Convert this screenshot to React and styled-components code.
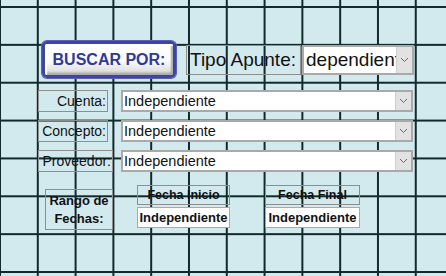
import React from "react";
import styled, { createGlobalStyle } from "styled-components";

const Global = createGlobalStyle`
  html, body { margin: 0; padding: 0; }
  body {
    background-color: #d2e9ee;
    font-family: "Liberation Sans", Arial, sans-serif;
  }
`;

const Sheet = styled.div`
  width: 446px;
  height: 276px;
  box-sizing: border-box;
  overflow: hidden;
  background-color: #d2e9ee;
  background-image:
    linear-gradient(to right, #10292b 2px, transparent 2px),
    linear-gradient(to bottom, #10292b 2px, transparent 2px);
  background-size: 37.8px 37.86px;
  background-position: -1px 6px;
  padding: 41px 0 0 38px;
  display: flex;
  flex-direction: column;
`;

const TopRow = styled.div`
  display: flex;
  align-items: center;
  padding-left: 4px;
  height: 37px;
  margin-bottom: 12px;
`;

const SearchButton = styled.div`
  box-sizing: border-box;
  width: 134px;
  height: 37px;
  border: 3px solid #3d44a3;
  border-radius: 5px;
  box-shadow: 0 0 0 1px #5a60b8;
  background: linear-gradient(#ffffff 0%, #fafafa 55%, #e2e2e2 85%, #bdbdbd 100%);
  display: flex;
  align-items: center;
  justify-content: center;
  font-weight: bold;
  font-size: 16px;
  color: #2f3a9c;
  position: relative;
  &::after {
    content: "";
    position: absolute;
    inset: 0;
    border-radius: 2px;
    box-shadow: inset 2px 2px 1px #ffffff, inset -2px -2px 2px #a9a9a9;
  }
`;

const Label = styled.div`
  box-sizing: border-box;
  width: ${(p) => p.$w}px;
  height: ${(p) => p.$h}px;
  margin-left: ${(p) => p.$ml || 0}px;
  border: 1.5px solid #8e8e8e;
  display: flex;
  align-items: center;
  justify-content: ${(p) => (p.$left ? "flex-start" : "flex-end")};
  padding: 0 ${(p) => (p.$left ? 0 : 1)}px 0 ${(p) => (p.$left ? 3 : 0)}px;
  font-size: ${(p) => p.$size}px;
  color: #111;
  white-space: nowrap;
  flex: 0 0 auto;
`;

const Select = styled.div`
  box-sizing: border-box;
  width: ${(p) => p.$w}px;
  height: ${(p) => p.$h}px;
  margin-left: ${(p) => p.$ml}px;
  border: 2px solid #a9a9a9;
  background: #fff;
  display: flex;
  align-items: stretch;
  flex: 0 0 auto;
  overflow: hidden;
`;

const SelectText = styled.div`
  flex: 1;
  min-width: 0;
  overflow: hidden;
  white-space: nowrap;
  display: flex;
  align-items: center;
  padding-left: ${(p) => p.$pl}px;
  font-size: ${(p) => p.$size}px;
  color: #111;
`;

const DropButton = styled.div`
  width: 15px;
  flex: 0 0 15px;
  background: #e2e2e2;
  border-left: 1px solid #cfcfcf;
  display: flex;
  align-items: center;
  justify-content: center;
`;

const FieldRow = styled.div`
  display: flex;
  align-items: center;
  width: 375px;
  height: 22px;
  margin-bottom: 8px;
`;

const DateArea = styled.div`
  display: flex;
  align-items: flex-start;
  margin-top: 5px;
`;

const RangeBox = styled.div`
  box-sizing: border-box;
  width: 68px;
  height: 41px;
  margin: 4px 0 0 7px;
  border: 1.5px solid #8e8e8e;
  display: flex;
  align-items: center;
  justify-content: center;
  text-align: center;
  font-weight: bold;
  font-size: 13px;
  line-height: 18px;
  color: #111;
`;

const DateCol = styled.div`
  display: flex;
  flex-direction: column;
  gap: 2px;
  width: ${(p) => p.$w}px;
  margin-left: ${(p) => p.$ml}px;
`;

const DateHead = styled.div`
  box-sizing: border-box;
  height: 20px;
  border: 1.5px solid #8e8e8e;
  display: flex;
  align-items: center;
  justify-content: center;
  font-weight: bold;
  font-size: 12.5px;
  color: #111;
  white-space: nowrap;
`;

const DateValue = styled(DateHead)`
  height: 21px;
  background: #fff;
  border-color: #a9a9a9;
  font-size: 13px;
  overflow: hidden;
`;

const Chevron = () => (
  <svg width="9" height="6" viewBox="0 0 9 6">
    <path d="M1 1 L4.5 4.5 L8 1" fill="none" stroke="#6a6a6a" strokeWidth="1" />
  </svg>
);

const Combo = ({ w, h, ml, size, pl, children }) => (
  <Select $w={w} $h={h} $ml={ml}>
    <SelectText $size={size} $pl={pl}>{children}</SelectText>
    <DropButton>
      <Chevron />
    </DropButton>
  </Select>
);

const rows = [
  { label: "Cuenta:", w: 70 },
  { label: "Concepto:", w: 70 },
  { label: "Proveedor:", w: 75 },
];

export default function App() {
  return (
    <>
      <Global />
      <Sheet>
        <TopRow>
          <SearchButton>BUSCAR POR:</SearchButton>
          <Label $w={115} $h={30} $size={19} $left $ml={10}>
            Tipo Apunte:
          </Label>
          <Combo w={112} h={30} ml={1} size={19} pl={2}>
            dependiente
          </Combo>
        </TopRow>
        {rows.map((r) => (
          <FieldRow key={r.label}>
            <Label $w={r.w} $h={22} $size={14}>
              {r.label}
            </Label>
            <Combo w={292} h={22} ml={121 - 38 - r.w} size={14.5} pl={1}>
              Independiente
            </Combo>
          </FieldRow>
        ))}
        <DateArea>
          <RangeBox>
            Rango de
            <br />
            Fechas:
          </RangeBox>
          <DateCol $w={93} $ml={24}>
            <DateHead>Fecha Inicio</DateHead>
            <DateValue>Independiente</DateValue>
          </DateCol>
          <DateCol $w={95} $ml={35}>
            <DateHead>Fecha Final</DateHead>
            <DateValue>Independiente</DateValue>
          </DateCol>
        </DateArea>
      </Sheet>
    </>
  );
}
